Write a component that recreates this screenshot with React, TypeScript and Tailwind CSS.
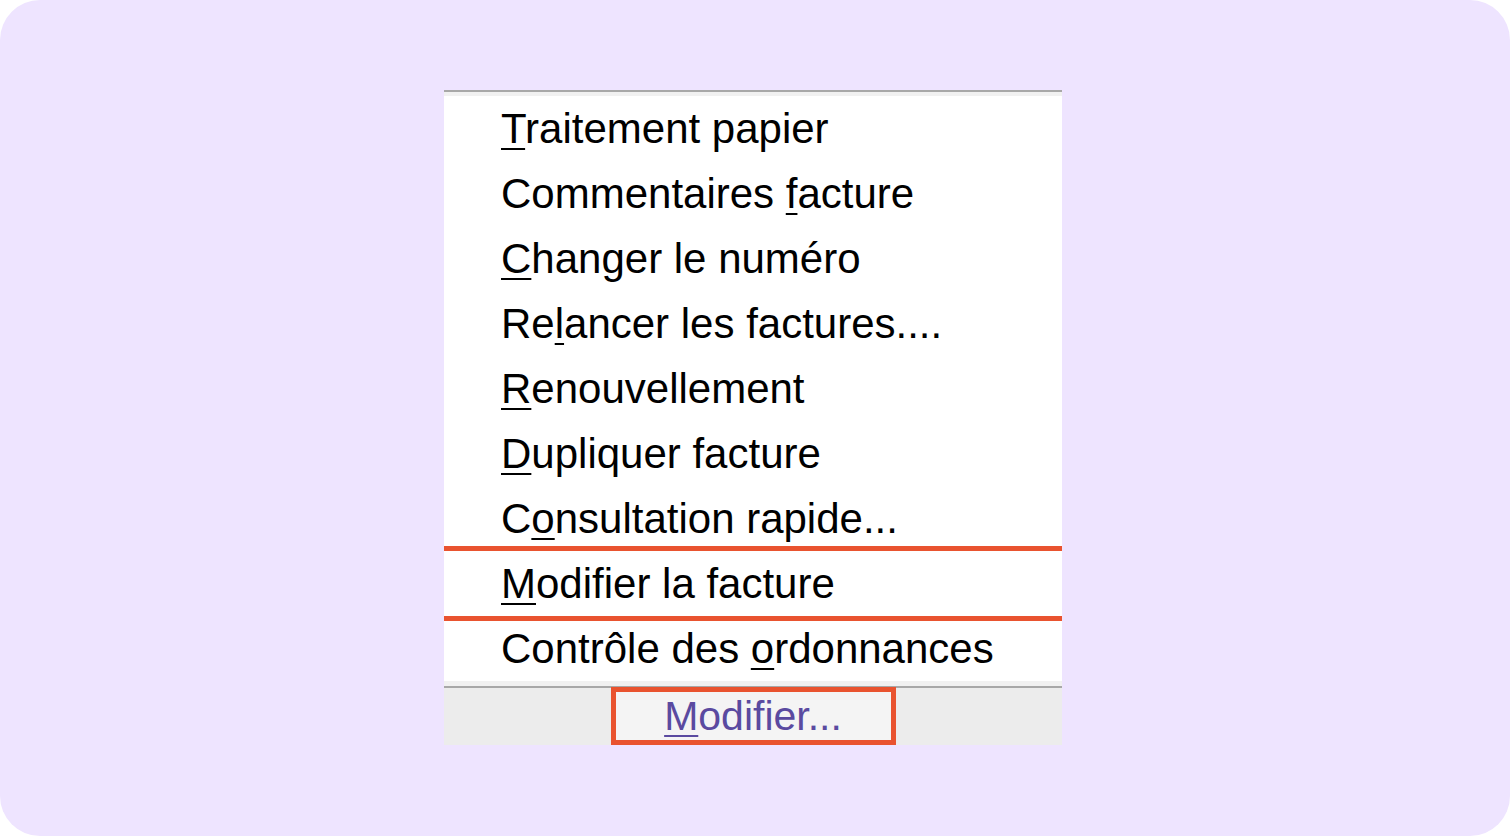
import React from 'react';

type MenuItem = {
  before: string;
  key: string;
  after: string;
  selected?: boolean;
};

const items: MenuItem[] = [
  { before: '', key: 'T', after: 'raitement papier' },
  { before: 'Commentaires ', key: 'f', after: 'acture' },
  { before: '', key: 'C', after: 'hanger le numéro' },
  { before: 'Re', key: 'l', after: 'ancer les factures....' },
  { before: '', key: 'R', after: 'enouvellement' },
  { before: '', key: 'D', after: 'upliquer facture' },
  { before: 'C', key: 'o', after: 'nsultation rapide...' },
  { before: '', key: 'M', after: 'odifier la facture', selected: true },
  { before: 'Contrôle des ', key: 'o', after: 'rdonnances' },
];

function Row({ item }: { item: MenuItem }) {
  return (
    <div
      className={
        item.selected
          ? 'relative z-10 h-[65px] bg-white pl-[57px] leading-[65px] shadow-[0_-5px_0_0_#e9532f,0_5px_0_0_#e9532f]'
          : 'h-[65px] bg-white pl-[57px] leading-[65px]'
      }
    >
      {item.before}
      <span className="underline decoration-2 underline-offset-[5px]">{item.key}</span>
      {item.after}
    </div>
  );
}

export default function App() {
  return (
    <div className="h-[836px] w-[1510px] bg-white font-['Liberation_Sans',Arial,sans-serif]">
      <div className="flex h-full rounded-[40px] bg-[#eee4ff] pl-[444px] pt-[90px]">
        <div className="flex h-[655px] w-[618px] flex-col">
          <div className="h-[2px] bg-[#a8a8a8]" />
          <div className="h-[4px] bg-[#f1f1f1]" />
          <div className="text-[42px] text-black">
            {items.map((item, i) => (
              <Row key={i} item={item} />
            ))}
          </div>
          <div className="h-[5px] bg-[#f1f1f1]" />
          <div className="h-[2px] bg-[#a8a8a8]" />
          <div className="flex h-[57px] justify-center bg-[#ececec]">
            <div className="-mt-px flex h-[58px] w-[285px] justify-center border-[5px] border-[#e9532f] bg-[#f4f4f4] text-[41px] leading-[48px] text-[#5a4aa0]">
              <span>
                <span className="underline decoration-2 underline-offset-[5px]">M</span>odifier...
              </span>
            </div>
          </div>
        </div>
      </div>
    </div>
  );
}
